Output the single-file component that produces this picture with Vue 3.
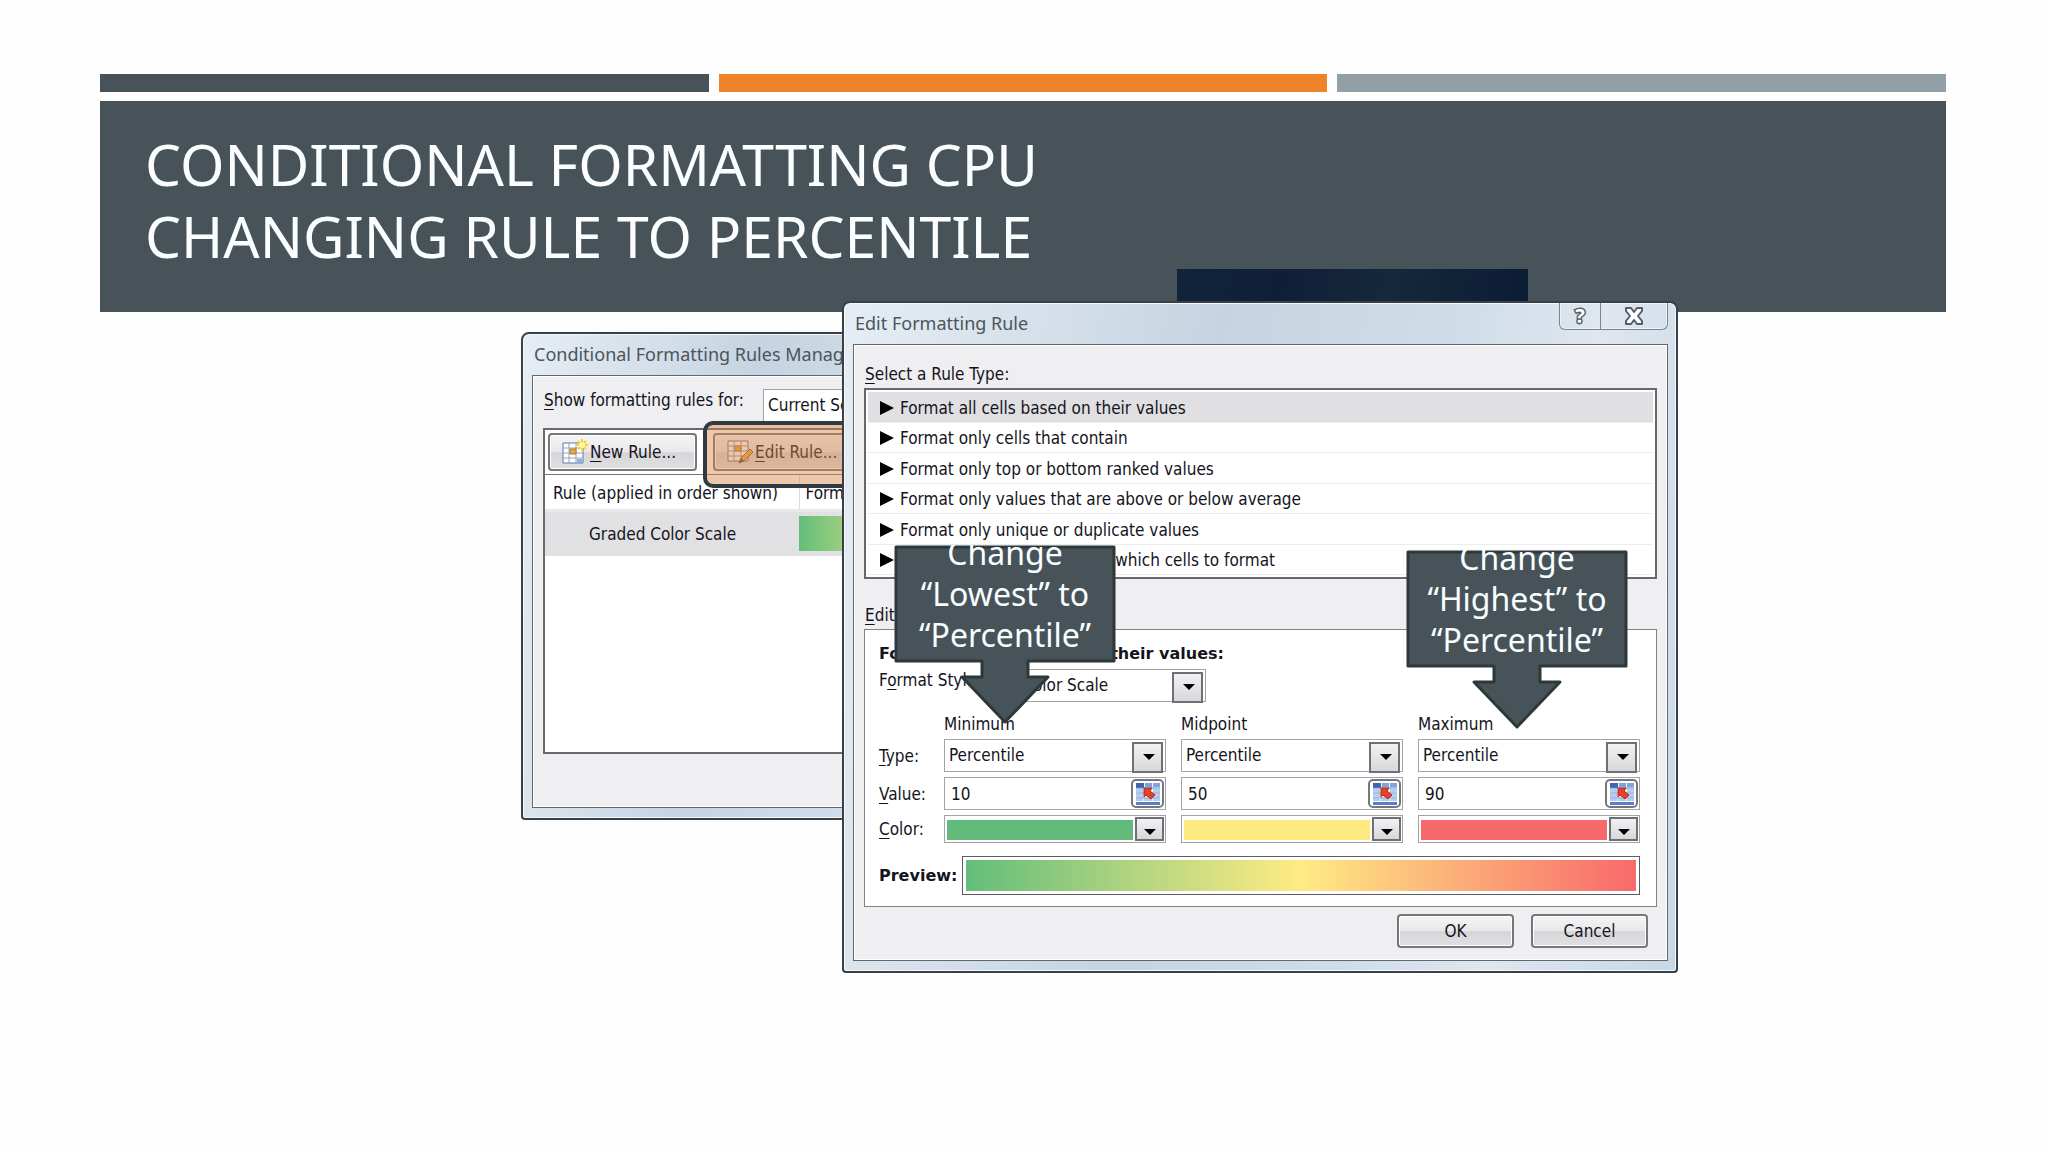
<script setup>
import { ref } from 'vue'

const ruleTypes = [
  'Format all cells based on their values',
  'Format only cells that contain',
  'Format only top or bottom ranked values',
  'Format only values that are above or below average',
  'Format only unique or duplicate values',
  'Use a formula to determine which cells to format',
]
const selected = ref(0)
const points = ref([
  { id: 'min', name: 'Minimum', type: 'Percentile', value: '10', color: '#63bb7b' },
  { id: 'mid', name: 'Midpoint', type: 'Percentile', value: '50', color: '#fde982' },
  { id: 'max', name: 'Maximum', type: 'Percentile', value: '90', color: '#f8696c' },
])
const callouts = [
  { id: 'low', lines: ['Change', '“Lowest” to', '“Percentile”'] },
  { id: 'high', lines: ['Change', '“Highest” to', '“Percentile”'] },
]
</script>

<template>
  <main class="slide">
    <div class="bars"><i class="slate"></i><i class="orange"></i><i class="grey"></i></div>
    <header class="band">
      <h1>CONDITIONAL FORMATTING CPU<br>CHANGING RULE TO PERCENTILE</h1>
    </header>
    <div class="navy"></div>

    <section class="window manager" aria-label="Conditional Formatting Rules Manager">
      <div class="titlebar">Conditional Formatting Rules Manager</div>
      <div class="client">
        <div class="scope">
          <label for="scope"><u>S</u>how formatting rules for:</label>
          <select id="scope" class="field"><option>Current Selection</option></select>
        </div>
        <div class="rules">
          <div class="tools">
            <button class="btn tool">
              <svg width="28" height="28" viewBox="0 0 28 28">
                <path d="M2 5h20v20H2z" fill="#fff" stroke="#5f79a8" />
                <path d="M2 10h20M2 15h20M2 20h20M8 5v20M15 5v20" stroke="#8ea4c4" />
                <path d="M9 11h6v5H9z" fill="#e8a63c" stroke="#b07a28" />
                <path d="M16 21h5v4h-5z" fill="#8fb0df" />
                <path d="M21 1v12M15 7h12M17 3l8 8M25 3l-8 8" stroke="#f5d22e" stroke-width="2" />
                <circle cx="21" cy="7" r="3" fill="#fff6a0" />
              </svg>
              <span><u>N</u>ew Rule...</span>
            </button>
            <button class="btn tool">
              <svg width="28" height="28" viewBox="0 0 28 28">
                <path d="M2 3h20v20H2z" fill="#fff" stroke="#6e7280" />
                <path d="M2 8h20M2 13h20M2 18h20M8 3v20M15 3v20" stroke="#8e94a4" />
                <path d="M9 8h6v5H9z" fill="#e4a33c" stroke="#b07a28" />
                <path d="M13 25l2-5 9-9 3 3-9 9z" fill="#f0a63c" stroke="#80602c" />
                <path d="M13 25l2-5 3 3z" fill="#584838" />
              </svg>
              <span><u>E</u>dit Rule...</span>
            </button>
          </div>
          <table>
            <thead><tr><th>Rule (applied in order shown)</th><th>Format</th></tr></thead>
            <tbody><tr><td class="name">Graded Color Scale</td><td><div class="swatch"></div></td></tr></tbody>
          </table>
        </div>
      </div>
      <div class="highlight"></div>
    </section>

    <section class="window editor" aria-label="Edit Formatting Rule">
      <div class="titlebar">
        <span>Edit Formatting Rule</span>
        <div class="controls">
          <button class="help" aria-label="Help">?</button>
          <button class="close" aria-label="Close">
            <svg width="20" height="18" viewBox="0 0 20 18">
              <path d="M2 1h5l3 4 3-4h5v3l-4 5 4 5v3h-5l-3-4-3 4H2v-3l4-5-4-5z" fill="#fff" stroke="#555d66" stroke-width="2" stroke-linejoin="round" />
            </svg>
          </button>
        </div>
      </div>
      <div class="client">
        <p class="caption"><u>S</u>elect a Rule Type:</p>
        <ul class="types">
          <li v-for="(rule, i) in ruleTypes" :key="rule" :class="{ on: selected === i }" @click="selected = i">
            <svg width="14" height="14" viewBox="0 0 14 14"><path d="M0 0l14 7-14 7z" /></svg>
            <span>{{ rule }}</span>
          </li>
        </ul>
        <p class="caption second"><u>E</u>dit the Rule Description:</p>
        <div class="description">
          <h2>Format all cells based on their values:</h2>
          <div class="style-row">
            <label for="style">F<u>o</u>rmat Style:</label>
            <span class="drop"><select id="style" class="field"><option>3-Color Scale</option></select><svg width="12" height="6" viewBox="0 0 12 6"><path d="M0 0h12l-6 6z" /></svg></span>
          </div>
          <div class="grid">
            <div class="names">
              <span></span>
              <span><u>T</u>ype:</span>
              <span><u>V</u>alue:</span>
              <span><u>C</u>olor:</span>
            </div>
            <div v-for="p in points" :key="p.id" class="point">
              <span class="head">{{ p.name }}</span>
              <span class="drop"><select v-model="p.type" class="field" :aria-label="p.name + ' type'"><option>Percentile</option></select><svg width="12" height="6" viewBox="0 0 12 6"><path d="M0 0h12l-6 6z" /></svg></span>
              <span class="value">
                <input v-model="p.value" :aria-label="p.name + ' value'">
                <button aria-label="Select range">
                  <svg width="24" height="22" viewBox="0 0 24 22">
                    <path d="M0 0h24v22H0z" fill="#f4f8ff" />
                    <path d="M0 0h8v5H0z" fill="#3b66b0" />
                    <path d="M9 0h7v4H9zM17 0h7v4h-7z" fill="#7fa3dd" />
                    <path d="M0 6h7v3H0zM0 11h7v3H0zM17 6h7v3h-7zM17 11h7v3h-7zM0 16h7v2H0zM8 16h8v2H8zM17 16h7v2h-7z" fill="#b7cdf0" />
                    <path d="M0 20h24M0 15h24M0 10h24M0 5h24" stroke="#6288c8" />
                    <path d="M0 19h24v3H0z" fill="#5a80c4" />
                    <path d="M8 5h8l-2 3 5 4-4 4-5-4-2 2z" fill="#e2432b" stroke="#b22c1a" />
                  </svg>
                </button>
              </span>
              <button class="color" :aria-label="p.name + ' color'">
                <i :style="{ background: p.color }"></i>
                <b><svg width="12" height="6" viewBox="0 0 12 6"><path d="M0 0h12l-6 6z" /></svg></b>
              </button>
            </div>
          </div>
          <div class="preview"><strong>Preview:</strong><div><i></i></div></div>
        </div>
        <div class="actions">
          <button class="btn">OK</button>
          <button class="btn">Cancel</button>
        </div>
      </div>
    </section>

    <aside v-for="c in callouts" :key="c.id" class="callout" :class="c.id">
      <svg width="222" height="180" viewBox="0 0 222 180">
        <path d="M2 2h218v114h-86v16h20l-43 45-43-45h20v-16H2z" fill="#475359" stroke="#2d383b" stroke-width="3" stroke-linejoin="round" />
      </svg>
      <p><span v-for="line in c.lines" :key="line">{{ line }}</span></p>
    </aside>
  </main>
</template>

<style>
body { background: #fefefe; }
</style>

<style scoped>
* { box-sizing: border-box; }
.slide {
  position: relative;
  min-height: 100vh;
  padding: 74px 102px 0 100px;
  overflow: hidden;
  font: 17px/22px "DejaVu Sans Condensed", "Noto Sans", sans-serif;
  color: #14141c;
}
p, h1, h2, ul { margin: 0; padding: 0; }
button, select, input { font: inherit; color: inherit; margin: 0; border-radius: 0; }
u { text-underline-offset: 3px; }
.bars { display: flex; gap: 10px; margin-bottom: 9px; }
.bars i { flex: 1; height: 18px; }
.slate { background: #475359; }
.orange { background: #ee8329; }
.grey { background: #929fa7; }
.band { height: 211px; padding: 27px 45px; background: #475259; }
h1 { font: 400 57px/72px "Noto Sans", sans-serif; color: #fbfeff; }
.navy { position: absolute; left: 1177px; top: 269px; width: 351px; height: 40px; background: linear-gradient(100deg, #12233c, #0f1f38 30%, #16283c 60%, #0b1c35); }

.window {
  position: absolute;
  display: flex;
  flex-direction: column;
  border: 2px solid #3a4048;
  border-radius: 8px 8px 4px 4px;
  background: linear-gradient(100deg, #e6edf4, #c6d4e1 40%, #cfdde8 65%, #dfe6ef 80%, #c6d8e6);
  box-shadow: inset 0 0 0 1px #f4f9fc;
  padding: 0 8px 10px 9px;
}
.titlebar { display: flex; justify-content: space-between; height: 41px; padding: 0 0 0 2px; font: 18px/40px "Noto Sans", sans-serif; color: #4c545c; white-space: nowrap; }
.client { flex: 1; border: 1px solid #60676e; box-shadow: inset 0 0 0 1px #fff; background: #efeef1; }
.manager { left: 521px; top: 332px; width: 520px; height: 488px; }
.editor { left: 842px; top: 301px; width: 836px; height: 672px; }

.scope { display: flex; align-items: flex-start; gap: 18px; height: 52px; padding: 13px 0 0 11px; }
.scope label { flex: none; width: 201px; white-space: nowrap; }
.field { appearance: none; width: 100%; height: 33px; border: 1px solid #a4a4a8; outline: 0; background: #fff; padding: 0 4px 2px; line-height: 22px; }
.rules { height: 326px; margin: 0 8px 0 10px; border: 2px solid #6a6a6e; background: #fff; }
.tools { display: flex; gap: 16px; height: 45px; padding: 3px; border-bottom: 1px solid #77777b; }
.btn { border: 2px solid #77777b; border-radius: 4px; background: linear-gradient(#f5f5f6, #e8e8ea 50%, #d6d6d8 52%, #e0e0e2); box-shadow: inset 0 0 0 1px #fff; }
.tool { display: flex; align-items: center; gap: 1px; width: 149px; height: 38px; padding: 0 11px; white-space: nowrap; }
table { width: 100%; border-collapse: collapse; }
th { height: 35px; padding: 2px 6px 0; border-bottom: 3px solid #e9e9ec; text-align: left; font-weight: 400; white-space: nowrap; }
th:first-child { width: 254px; padding: 2px 8px 0; border-right: 1px solid #dcdce0; }
tbody tr { background: #e1e0e3; }
td { height: 46px; padding: 0; }
.name { padding-left: 44px; }
.swatch { height: 35px; background: linear-gradient(90deg, #63be7b, #ffeb84 55%, #f8696b); }
.highlight { position: absolute; left: 180px; top: 87px; width: 300px; height: 67px; border: 4px solid #2f3b40; border-radius: 10px; background: rgba(214, 134, 74, 0.45); }

.controls { display: flex; height: 27px; border: 1px solid #7b838c; border-top: 0; border-radius: 0 0 6px 6px; box-shadow: inset 0 0 0 1px #eef3f8; }
.controls button { display: grid; place-items: center; border: 0; background: none; padding: 0; }
.controls .help { width: 41px; border-right: 1px solid #7b838c; font: 700 20px/24px "Noto Sans", sans-serif; color: #fff; -webkit-text-stroke: 3px #555d66; paint-order: stroke fill; }
.controls .close { width: 66px; }
.caption { padding: 18px 0 3px 11px; }
.types { display: grid; grid-template-rows: repeat(6, 1fr); height: 191px; margin: 0 10px; padding: 2px; border: 2px solid #68686c; background: #fff; list-style: none; }
.types li { display: flex; align-items: center; gap: 6px; padding: 2px 0 0 12px; border-bottom: 1px solid #ececef; }
.types .on { background: #e0dfe2; }
.caption.second { padding-top: 25px; }
.description { display: flex; flex-direction: column; height: 278px; margin: 0 10px; padding: 13px 16px 11px 14px; border: 1px solid #838387; background: #fff; }
h2, strong { font: 700 16px/22px "DejaVu Sans", sans-serif; }
.style-row { display: flex; height: 48px; padding-top: 4px; }
.style-row label { width: 123px; }
.style-row .drop { width: 204px; }
.drop { position: relative; display: block; }
.drop::after { content: ""; position: absolute; right: 3px; top: 3px; width: 27px; height: 27px; border: 2px solid #707074; background: linear-gradient(#f2f2f4, #d8d8da); }
.drop svg { position: absolute; right: 11px; top: 15px; z-index: 1; }
.grid { display: flex; justify-content: space-between; }
.names, .point { display: grid; grid-template-rows: 21px 33px 33px 28px; row-gap: 5px; }
.names { width: 50px; align-items: center; }
.point { grid-template-columns: minmax(0, 1fr); width: 222px; }
.value { display: flex; height: 33px; border: 1px solid #a4a4a8; padding: 1px; background: #fff; }
.value input { flex: 1; min-width: 0; border: 0; outline: 0; background: none; padding: 0 5px; }
.value button { display: grid; place-items: center; width: 33px; border: 2px solid #77777b; border-radius: 5px; background: #fff; padding: 0; }
.color { display: flex; height: 28px; border: 1px solid #a4a4a8; background: #fff; padding: 1px; }
.color i { flex: 1; height: 20px; margin: 3px 2px 0 1px; }
.color b { display: grid; place-items: center; width: 29px; height: 24px; padding-top: 5px; border: 2px solid #707074; background: linear-gradient(#f2f2f4, #d8d8da); }
.preview { display: flex; align-items: center; gap: 3px; margin-top: auto; }
.preview strong { width: 80px; }
.preview div { flex: 1; height: 39px; padding: 3px; border: 1px solid #5c5c60; }
.preview i { display: block; height: 100%; background: linear-gradient(90deg, #63be7b, #ffeb84 50%, #f8696b); }
.actions { display: flex; justify-content: flex-end; gap: 17px; padding: 7px 19px 0; }
.actions .btn { width: 117px; height: 34px; padding: 0; }

.callout { position: absolute; width: 222px; height: 180px; }
.low { left: 894px; top: 545px; }
.high { left: 1406px; top: 550px; }
.callout svg { display: block; }
.callout p { position: absolute; inset: 0 0 70px; display: flex; flex-direction: column; justify-content: flex-end; overflow: hidden; text-align: center; font: 32px/41px "Noto Sans", sans-serif; color: #f8fdff; }
.callout span { flex: none; }
</style>
